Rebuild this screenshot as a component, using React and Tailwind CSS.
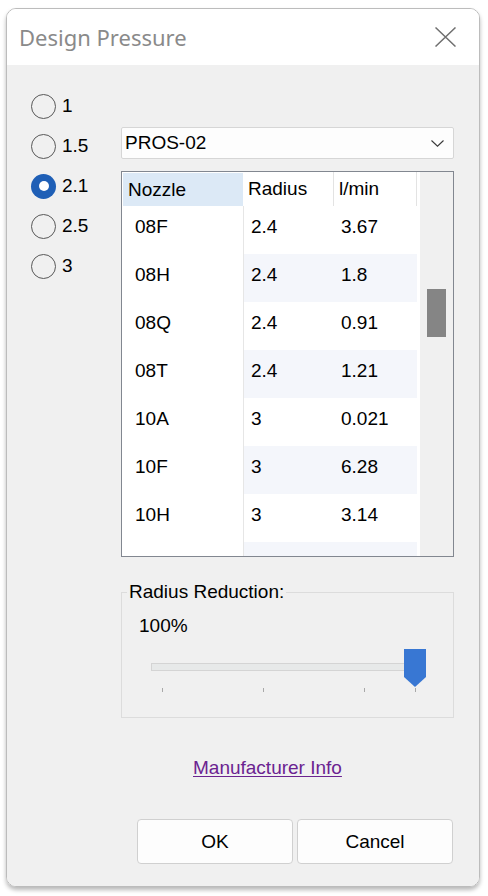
import React from "react";

const rows = [
  ["08F", "2.4", "3.67"],
  ["08H", "2.4", "1.8"],
  ["08Q", "2.4", "0.91"],
  ["08T", "2.4", "1.21"],
  ["10A", "3", "0.021"],
  ["10F", "3", "6.28"],
  ["10H", "3", "3.14"],
  ["", "", ""],
];

const radios = ["1", "1.5", "2.1", "2.5", "3"];

export default function App() {
  return (
    <div className="w-[488px] h-[896px] bg-white overflow-hidden" style={{ fontFamily: '"Liberation Sans", Arial, sans-serif' }}>
      <div className="ml-[6px] mt-[8px] w-[474px] h-[879px] rounded-[10px] border border-[#bcbcbc] overflow-hidden shadow-[0_3px_4px_rgba(0,0,0,0.28)] flex flex-col">
        {/* Title bar */}
        <div className="h-[56px] bg-white flex items-center justify-between pl-[12px] pr-[23px]">
          <span className="text-[22px] leading-[30px] text-[#8a8a8a]" style={{ fontFamily: '"Noto Sans", "Open Sans", sans-serif' }}>
            Design Pressure
          </span>
          <svg width="21" height="20" viewBox="0 0 21 20">
            <path d="M0.5 0.5 L20.5 19.5 M20.5 0.5 L0.5 19.5" stroke="#707070" strokeWidth="1.5" fill="none" />
          </svg>
        </div>
        {/* Body */}
        <div className="flex-1 bg-[#f0f0f0] flex text-[19px] leading-[22px] text-black">
          {/* Radio column */}
          <div className="w-[114px] pl-[24px] pt-[21px] flex flex-col">
            {radios.map((r) => {
              const sel = r === "2.1";
              return (
                <div key={r} className="h-[40px] flex items-center gap-[6px]">
                  {sel ? (
                    <div className="w-[25px] h-[25px] rounded-full bg-[#1f5fb6] flex items-center justify-center">
                      <div className="w-[10px] h-[10px] rounded-full bg-white" />
                    </div>
                  ) : (
                    <div className="w-[25px] h-[25px] rounded-full border-[1.5px] border-[#585858] bg-[#f0f0f0]" />
                  )}
                  <span>{r}</span>
                </div>
              );
            })}
          </div>
          {/* Right column */}
          <div className="w-[333px] pt-[62px] flex flex-col">
            {/* Dropdown */}
            <div className="h-[32px] bg-[#fdfdfd] border border-[#d6d6d6] rounded-[2px] flex items-center justify-between pl-[3px] pr-[9px]">
              <span>PROS-02</span>
              <svg width="13" height="7" viewBox="0 0 13 7">
                <path d="M0.5 0.5 L6.5 6.2 L12.5 0.5" stroke="#3a3a3a" strokeWidth="1.1" fill="none" />
              </svg>
            </div>
            {/* Table */}
            <div className="mt-[12px] h-[386px] border border-[#828790] bg-white flex overflow-hidden">
              <div className="w-[298px] flex flex-col overflow-hidden">
                <div className="h-[34px] shrink-0 flex">
                  <div className="w-[121px] h-full pl-px pt-px">
                    <div className="h-full bg-[#dce9f6] pl-[5px] flex items-center">Nozzle</div>
                  </div>
                  <div className="w-[90px] h-full pl-[5px] flex items-center">Radius</div>
                  <div className="w-[84px] h-full border-l border-r border-[#e3e3e3] pl-[5px] flex items-center">l/min</div>
                </div>
                {rows.map((row, i) => {
                  const alt = i % 2 === 1;
                  return (
                    <div key={i} className="h-[48px] shrink-0 flex">
                      <div className="w-[121px] h-full pl-[13px] pt-[10px]">{row[0]}</div>
                      <div className={`w-[90px] h-full border-l border-[#e6e6e6] pl-[7px] pt-[10px] ${alt ? "bg-[#f4f6fb]" : "bg-white"}`}>{row[1]}</div>
                      <div className={`w-[84px] h-full pl-[8px] pt-[10px] ${alt ? "bg-[#f4f6fb]" : "bg-white"}`}>{row[2]}</div>
                    </div>
                  );
                })}
              </div>
              <div className="w-[33px] bg-[#f0f0f0] pl-[7px] pt-[117px]">
                <div className="w-[19px] h-[48px] bg-[#858585]" />
              </div>
            </div>
            {/* Group box */}
            <div className="relative mt-[35px] h-[126px] border border-[#dcdcdc] pl-[17px] pt-[22px]">
              <span className="absolute left-[5px] top-[-12px] px-[2px] bg-[#f0f0f0]">Radius Reduction:</span>
              <div>100%</div>
              <div className="relative mt-[12px] ml-[12px] w-[276px] h-[44px]">
                <div className="absolute left-0 top-[14px] w-[275px] h-[8px] bg-[#e7e9e9] border border-[#d4d4d4]" />
                <div className="absolute left-[11px] top-[39px] w-px h-[4px] bg-[#a8a8a8]" />
                <div className="absolute left-[112px] top-[39px] w-px h-[4px] bg-[#a8a8a8]" />
                <div className="absolute left-[213px] top-[39px] w-px h-[4px] bg-[#a8a8a8]" />
                <div className="absolute left-[264px] top-[39px] w-px h-[4px] bg-[#a8a8a8]" />
                <svg className="absolute left-[253px] top-0" width="22" height="38" viewBox="0 0 22 38">
                  <polygon points="0,0 22,0 22,28 11,38 0,28" fill="#3877d3" />
                </svg>
              </div>
            </div>
            {/* Link */}
            <div className="mt-[39px] ml-[72px] h-[22px]">
              <span className="underline text-[#6b2390] underline-offset-[2px]">Manufacturer Info</span>
            </div>
            {/* Buttons */}
            <div className="mt-[40px] ml-[16px] flex gap-[4px]">
              <button className="w-[156px] h-[45px] bg-[#fdfdfd] border border-[#d0d0d0] rounded-[4px] text-black">OK</button>
              <button className="w-[156px] h-[45px] bg-[#fdfdfd] border border-[#d0d0d0] rounded-[4px] text-black">Cancel</button>
            </div>
          </div>
        </div>
      </div>
    </div>
  );
}
